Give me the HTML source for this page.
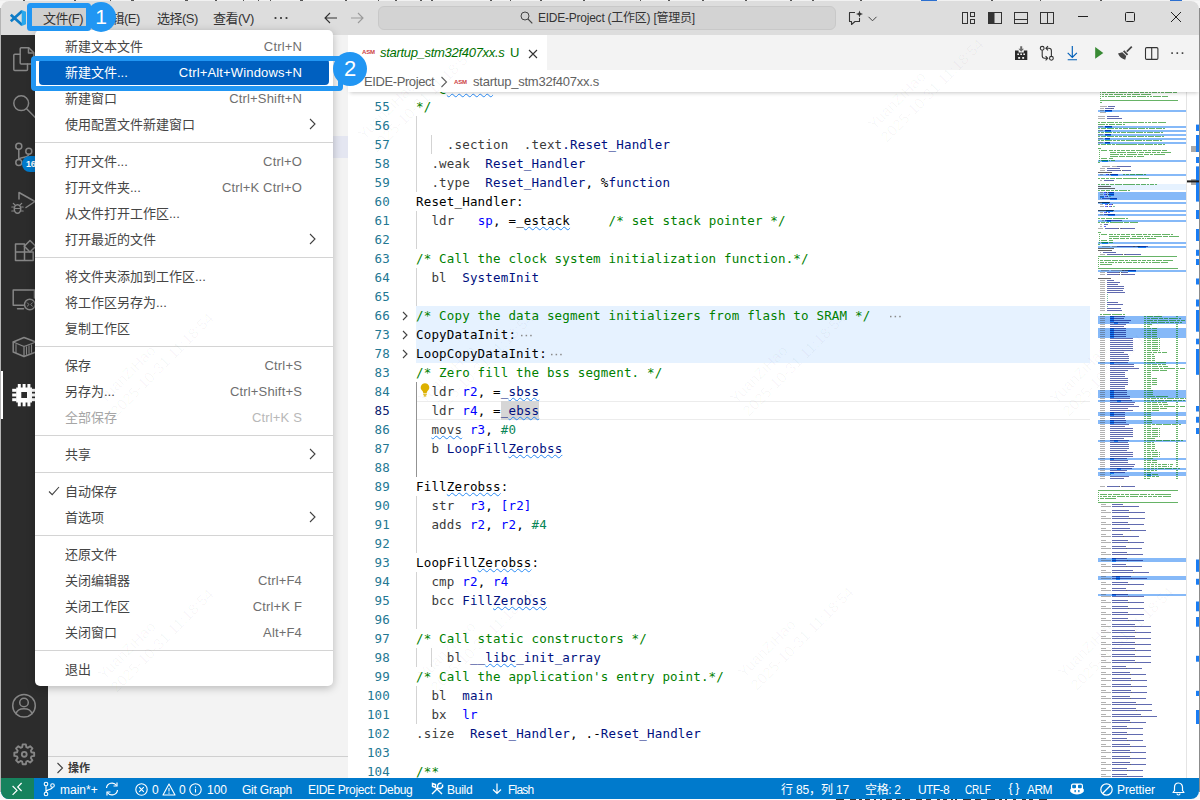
<!DOCTYPE html>
<html lang="zh-CN">
<head>
<meta charset="utf-8">
<title>EIDE-Project</title>
<style>
*{box-sizing:border-box;margin:0;padding:0}
html,body{width:1200px;height:800px;overflow:hidden;background:#f6f6f6}
body{position:relative;font-family:"Liberation Sans","Noto Sans CJK SC",sans-serif;font-size:13px;color:#333}
.abs{position:absolute}
svg{position:absolute;overflow:visible}
#win{left:1px;top:1px;width:1198px;height:797.500px;border-radius:8px;overflow:hidden;background:#fff}
#page{left:-1px;top:-1px;width:1200px;height:800px}
/* title bar */
#title{left:0;top:0;width:1200px;height:35px;background:#dddddd}
.mi{position:absolute;top:2px;height:33px;line-height:33px;font-size:13px;color:#333;white-space:nowrap;letter-spacing:-0.5px}
#cc{left:378px;top:6px;width:458px;height:24px;border:1px solid #c8c8c8;border-radius:6px;background:#d3d3d3}
#cctext{left:142px;top:0;height:22px;line-height:22px;font-size:12px;letter-spacing:-0.24px;color:#333;white-space:nowrap}
/* activity bar */
#act{left:0;top:35px;width:48px;height:743px;background:#2c2c2c}
/* side bar */
#side{left:48px;top:35px;width:300px;height:743px;background:#f3f3f3}
/* editor */
#tabs{left:348px;top:35px;width:852px;height:35px;background:#f3f3f3}
#tab{left:0;top:0;width:200px;height:35px;background:#fff}
#crumbs{left:348px;top:70px;width:852px;height:22px;background:#fff;z-index:3;box-shadow:0 3px 4px -2px rgba(0,0,0,.22)}
#editor{left:348px;top:92px;width:852px;height:686px;background:#fff;overflow:hidden}
.ln{position:absolute;left:0;width:742px;height:19px;line-height:19px;font-family:"DejaVu Sans Mono","Liberation Mono",monospace;font-size:12.5px;letter-spacing:0.175px;white-space:pre;color:#000}
.ln .n{position:absolute;left:0;width:42px;text-align:right;color:#237893}
.ln .c{position:absolute;left:68px;top:0}
.ln .fb{position:absolute;left:68px;top:0;width:674px;height:19px;background:#e6f2ff}
.ln .g{position:absolute;top:0;width:1px;height:19px;background:#d3d3d3}
.ln .g.on{background:#939393}
.cm{color:#008000}.kw{color:#0000ff}.dr{color:#3b3b3b}.lb{color:#001080}.nm{color:#098658}
.sq{text-decoration:underline wavy #2a8bf5;text-decoration-thickness:1.15px;text-underline-offset:0.8px;text-decoration-skip-ink:none}
.hl{background:#d6d6d6;padding:2.2px 0 2.3px}
.el{color:#7a7a7a}
.ln .cl{position:absolute;left:68px;top:0;width:674px;height:19px;border-top:1px solid #ececec;border-bottom:1px solid #ececec}
.ln .n.cn{color:#0b216f}
/* status */
#status{left:0;top:778px;width:1200px;height:22px;background:#007acc;color:#fff;font-size:12px}
#remote{left:0;top:0;width:34px;height:22px;background:#16825d}
.st{position:absolute;top:0;height:22px;line-height:24px;color:#fff;font-size:12px;white-space:nowrap}
/* menu */
#menu{left:35px;top:29.500px;width:298px;height:656.500px;background:#fff;border-radius:5px;box-shadow:0 2px 8px rgba(0,0,0,.25);z-index:10}
.it{position:absolute;left:4px;width:290px;height:26px;line-height:26px;font-size:13px;color:#454545;white-space:nowrap;border-radius:4px}
.it .t{position:absolute;left:26px;top:1px}
.it .k{position:absolute;right:27px;top:1px;color:#6f6f6f;letter-spacing:0.16px}
.it .a{position:absolute;right:10px;top:0}
.it.sel{background:#0060c0;color:#fff}
.it.sel .k{color:#fff}
.it.dis{color:#a6a6a6}.it.dis .k{color:#b8b8b8}
.sep{position:absolute;left:0;width:298px;height:1px;background:#d4d4d4}
.wm{position:absolute;width:150px;height:36px;line-height:18px;font-size:15px;color:rgba(0,0,0,.035);transform:rotate(-45deg);white-space:nowrap;z-index:30;pointer-events:none}
/* annotations */
.box{position:absolute;border:5px solid #2196f3;border-radius:4px;z-index:20}
.dot{position:absolute;width:34px;height:34px;border-radius:17px;background:#2196f3;color:#fff;font-size:22px;line-height:34px;text-align:center;z-index:21}
</style>
</head>
<body>
<div id="win" class="abs"><div id="page" class="abs">
<div id="title" class="abs">
  <svg width="16" height="16" viewBox="0 0 16 16" style="left:10px;top:10px">
    <path d="M12.200 1L0.800 11.200M12.200 15L0.800 4.800" stroke="#0e7cc7" stroke-width="2.700" fill="none"/>
    <path d="M11.700 0L16 1.800V14.200L11.700 16Z" fill="#29a8ed"/>
  </svg>
  <div class="abs" style="left:30px;top:6px;width:62px;height:23px;background:#cfcfcf"></div>
  <span class="mi" style="left:43px">文件(F)</span>
  <span class="mi" style="left:99px">编辑(E)</span>
  <span class="mi" style="left:157px">选择(S)</span>
  <span class="mi" style="left:213px">查看(V)</span>
  <svg width="16" height="4" viewBox="0 0 16 4" style="left:273px;top:16px"><circle cx="2.5" cy="2" r="1.1" fill="#333"/><circle cx="8" cy="2" r="1.1" fill="#333"/><circle cx="13.5" cy="2" r="1.1" fill="#333"/></svg>
  <svg width="14" height="12" viewBox="0 0 14 12" style="left:324px;top:12px"><path d="M6 1 L1 6 L6 11 M1 6 H13" fill="none" stroke="#333" stroke-width="1.1"/></svg>
  <svg width="14" height="12" viewBox="0 0 14 12" style="left:350px;top:12px"><path d="M8 1 L13 6 L8 11 M13 6 H1" fill="none" stroke="#9a9a9a" stroke-width="1.1"/></svg>
  <div id="cc" class="abs">
    <svg width="13" height="13" viewBox="0 0 13 13" style="left:141px;top:4px"><circle cx="5" cy="5" r="4" fill="none" stroke="#444" stroke-width="1"/><path d="M8 8 L12.3 12.3" stroke="#444" stroke-width="1.1"/></svg>
    <div id="cctext" class="abs" style="left:159px">EIDE-Project (工作区) [管理员]</div>
  </div>
  <!-- chat -->
  <svg width="18" height="16" viewBox="0 0 18 16" style="left:847px;top:10px"><path d="M8 2.500H2.500V11.500H4.500V14.500L8 11.500H12.500V8" fill="none" stroke="#333" stroke-width="1.1" stroke-linejoin="round"/><path d="M12.500 0.500 L13.400 3.100 L16 4 L13.400 4.900 L12.500 7.500 L11.600 4.900 L9 4 L11.600 3.100Z" fill="#333"/></svg>
  <svg width="9" height="6" viewBox="0 0 9 6" style="left:868px;top:16px"><path d="M0.500 0.800 L4.500 4.800 L8.500 0.800" fill="none" stroke="#444" stroke-width="1"/></svg>
  <!-- layout icons -->
  <svg width="16" height="16" viewBox="0 0 16 16" style="left:961px;top:10px"><rect x="1.500" y="2.500" width="5" height="11" fill="none" stroke="#333"/><rect x="9.500" y="2.500" width="4" height="4" fill="none" stroke="#333"/><rect x="9.500" y="9.500" width="4" height="4" fill="none" stroke="#333"/></svg>
  <svg width="16" height="16" viewBox="0 0 16 16" style="left:987px;top:10px"><rect x="1.500" y="2.500" width="13" height="11" fill="none" stroke="#333"/><rect x="2" y="3" width="5.500" height="10" fill="#333"/></svg>
  <svg width="16" height="16" viewBox="0 0 16 16" style="left:1013px;top:10px"><rect x="1.500" y="2.500" width="13" height="11" fill="none" stroke="#333"/><path d="M2 9.500H14" stroke="#333"/></svg>
  <svg width="16" height="16" viewBox="0 0 16 16" style="left:1039px;top:10px"><rect x="1.500" y="2.500" width="13" height="11" fill="none" stroke="#333"/><path d="M8.500 3V13" stroke="#333"/></svg>
  <!-- window controls -->
  <svg width="10" height="2" viewBox="0 0 10 2" style="left:1078px;top:16px"><path d="M0 0.500H10" stroke="#222" stroke-width="1"/></svg>
  <svg width="10" height="10" viewBox="0 0 10 10" style="left:1125px;top:12px"><rect x="0.500" y="0.500" width="9" height="9" rx="1" fill="none" stroke="#222" stroke-width="1"/></svg>
  <svg width="10" height="10" viewBox="0 0 10 10" style="left:1171px;top:12px"><path d="M0 0 L10 10 M10 0 L0 10" stroke="#222" stroke-width="1"/></svg>
</div>
<div id="act" class="abs">
<svg width="48" height="743" viewBox="0 35 48 743" style="left:0;top:0" fill="none" stroke="#868686" stroke-width="1.5" stroke-linejoin="round" stroke-linecap="round">
  <!-- files -->
  <path d="M20.200 53.500V48.800a1 1 0 0 1 1-1H28.800L33.800 52.800V63a1 1 0 0 1-1 1H21.200a1 1 0 0 1-1-1Z"/>
  <path d="M28.500 48V53H33.500"/>
  <path d="M20.200 54.200H14.800a1 1 0 0 0-1 1V69.400a1 1 0 0 0 1 1H26.500a1 1 0 0 0 1-1V64"/>
  <!-- search -->
  <circle cx="21.200" cy="103.200" r="7.400"/><path d="M26.600 108.700L36 118.200"/>
  <!-- scm -->
  <circle cx="18.800" cy="146.300" r="3"/><circle cx="18.800" cy="162.600" r="3"/><circle cx="28.800" cy="151.300" r="3"/>
  <path d="M18.800 149.300V159.600M28.800 154.300C28.800 158.500 18.800 156.500 18.800 159.600"/>
  <!-- debug -->
  <path d="M19 199V192.500L35 201.500L26 207.500"/>
  <ellipse cx="17.500" cy="209" rx="3.200" ry="4.200"/>
  <path d="M14.300 207H11.800M14.300 211H11.800M20.700 207H23.200M20.700 211H23.200M15 205L13.300 203.300M20 205L21.700 203.300M14.400 208.500H20.600" stroke-width="1.200"/>
  <!-- extensions -->
  <path d="M15.500 244H24.500V260.500H15.500ZM15.500 252H33.200V260.500H24.500"/>
  <path d="M30 240.500L35.800 246.300L30 252L24.300 246.300Z"/>
  <!-- remote explorer -->
  <path d="M23.500 305.200H13.200V290H34.500V298"/><path d="M17.500 308.800H23.500"/>
  <circle cx="29.800" cy="304.500" r="5.300"/><path d="M27.300 302.800L29 304.500L27.300 306.200M32.300 302.800L30.800 304.500L32.300 306.200" stroke-width="1"/>
  <!-- container -->
  <path d="M13.200 342L24 337.500L36 342V352L24 356.500L13.200 352Z"/>
  <path d="M13.200 342L24 346.500L36 342M24 346.500V356.500" stroke-width="1.300"/>
  <path d="M26.500 346.800V354.300M29 345.800V353.300M31.500 344.800V352.300M16 344.500V352.500" stroke-width="1.100"/>
  <!-- account -->
  <circle cx="24" cy="705.800" r="11.300"/><circle cx="24" cy="702.500" r="4.300"/>
  <path d="M16 713.800C17 709.800 20 708.800 24 708.800S31 709.800 32 713.800"/>
</svg>
  <div class="abs" style="left:22px;top:121px;width:20px;height:16px;border-radius:8px;background:#007acc;color:#fff;font-size:9px;font-weight:bold;line-height:16px;text-align:left;padding-left:4px;letter-spacing:-0.3px">16</div>
  <!-- EIDE chip active -->
  <div class="abs" style="left:1px;top:336px;width:2px;height:48px;background:#fff"></div>
  <svg width="26" height="24" viewBox="12 383 26 24" style="left:12px;top:348px" fill="#fff"><path d="M16.200 387.500H32V402.500H16.200Z M21.300 392V398H27V392Z" fill-rule="evenodd"/>
  <rect x="17.800" y="384" width="3" height="4"/><rect x="22.600" y="384" width="3" height="4"/><rect x="27.400" y="384" width="3" height="4"/>
  <rect x="17.800" y="402" width="3" height="4.300"/><rect x="22.600" y="402" width="3" height="4.300"/><rect x="27.400" y="402" width="3" height="4.300"/>
  <rect x="12.200" y="388.800" width="4.500" height="3"/><rect x="12.200" y="393.500" width="4.500" height="3"/><rect x="12.200" y="398.200" width="4.500" height="3"/>
  <rect x="31.500" y="388.800" width="4.500" height="3"/><rect x="31.500" y="393.500" width="4.500" height="3"/><rect x="31.500" y="398.200" width="4.500" height="3"/></svg>
  <!-- gear -->
  <svg width="22.500" height="22.500" viewBox="0 0 24 24" style="left:12.800px;top:708px" fill="none" stroke="#868686" stroke-width="2" stroke-linejoin="round"><circle cx="12" cy="12" r="2.600"/><path d="M10.300 1.500h3.400l.5 2.900 1.700.7 2.400-1.700 2.400 2.400-1.700 2.400.7 1.700 2.900.5v3.400l-2.900.5-.7 1.700 1.700 2.400-2.400 2.400-2.400-1.700-1.700.7-.5 2.900h-3.400l-.5-2.900-1.700-.7-2.400 1.700-2.400-2.400 1.700-2.400-.7-1.700-2.900-.5v-3.400l2.900-.5.700-1.700-1.700-2.400 2.400-2.400 2.400 1.700 1.700-.7z"/></svg>
</div>
<div id="side" class="abs">
  <div class="abs" style="left:0;top:100.500px;width:300px;height:22.500px;background:#e4e6f1"></div>
  <div class="abs" style="left:0;top:721px;width:300px;height:1px;background:#cfcfcf"></div>
  <svg width="8" height="12" viewBox="0 0 8 12" style="left:8px;top:727px"><path d="M1.500 1L6.500 6L1.500 11" fill="none" stroke="#424242" stroke-width="1.100"/></svg>
  <div class="abs" style="left:20px;top:722px;height:22px;line-height:22px;font-size:11px;font-weight:bold;color:#3b3b3b">操作</div>
</div>
<div id="tabs" class="abs">
  <div id="tab" class="abs" style="width:199px">
    <span class="abs" style="left:14px;top:12.500px;font-size:6px;font-weight:bold;color:#cc3e44;letter-spacing:-0.2px;line-height:8px">ASM</span>
    <span class="abs" id="tabname" style="left:32px;top:0;line-height:36px;font-size:13px;font-style:italic;color:#007100;white-space:nowrap;letter-spacing:-0.3px">startup_stm32f407xx.s</span>
    <span class="abs" style="left:162px;top:0;line-height:35px;font-size:13px;color:#007100">U</span>
    <svg width="10" height="10" viewBox="0 0 10 10" style="left:180px;top:14px"><path d="M1 1L9 9M9 1L1 9" stroke="#333" stroke-width="1.100"/></svg>
  </div>
  <!-- toolbar icons drawn in page coords -->
  <svg width="200" height="35" viewBox="1000 35 200 35" style="left:652px;top:0">
    <!-- build chip -->
    <path d="M1015 50.400H1018.600V52.600H1023.800V50.400H1027.300V60H1015Z" fill="#2b2b2b"/>
    <g fill="#f3f3f3"><rect x="1017.300" y="53.500" width="1.700" height="1.500"/><rect x="1020.300" y="53.500" width="1.700" height="1.500"/><rect x="1023.300" y="53.500" width="1.700" height="1.500"/><rect x="1018.200" y="57" width="1.900" height="1.800"/><rect x="1022.200" y="57" width="1.900" height="1.800"/></g>
    <path d="M1020.200 46.200H1022.200V48.800H1024L1021.200 51.800L1018.400 48.800H1020.200Z" fill="#6a6a6a"/>
    <!-- git compare -->
    <g fill="none" stroke="#333" stroke-width="1.100"><circle cx="1042.200" cy="48.300" r="1.900"/><circle cx="1051.400" cy="58.300" r="1.900"/>
    <path d="M1042.200 50.200V55.800Q1042.200 58.300 1044.700 58.300H1047.600M1045.600 56.200L1047.700 58.300L1045.600 60.400M1051.400 56.400V50.800Q1051.400 48.300 1048.900 48.300H1046M1048 46.200L1045.900 48.300L1048 50.400"/></g>
    <!-- download -->
    <path d="M1072.300 46V57.300M1067.700 52.800L1072.300 57.400L1076.900 52.800M1067.700 59.700H1077" fill="none" stroke="#005fb8" stroke-width="1.150"/>
    <!-- play -->
    <path d="M1095.200 47L1103.300 52.900L1095.200 58.800Z" fill="#388a34"/>
    <!-- brush -->
    <path d="M1131.800 46.600L1126.800 51.600" stroke="#444" stroke-width="1.700" fill="none"/>
    <path d="M1124.300 50.300L1128.200 54.200L1126.900 55.400L1123 51.500Z" fill="#444"/>
    <path d="M1122.300 52.200L1126.200 56.100L1125.200 59.800Q1120 58.300 1118 53.600Z" fill="#444"/>
    <!-- split -->
    <g fill="none" stroke="#333" stroke-width="1.100"><rect x="1145.500" y="47.600" width="12.400" height="11.800" rx="1.200"/><path d="M1151.700 47.600V59.400"/></g>
    <!-- more -->
    <g fill="#333"><rect x="1171.300" y="52.300" width="1.600" height="1.600"/><rect x="1176.500" y="52.300" width="1.600" height="1.600"/><rect x="1181.700" y="52.300" width="1.600" height="1.600"/></g>
  </svg>
</div>
<div id="crumbs" class="abs">
  <span class="abs" id="bc1" style="left:16px;top:0;line-height:23px;font-size:13px;color:#616161;white-space:nowrap;letter-spacing:-0.4px">EIDE-Project</span>
  <svg width="8" height="12" viewBox="0 0 8 12" style="left:92px;top:6px"><path d="M1.500 1L6.500 6L1.500 11" fill="none" stroke="#616161" stroke-width="1.100"/></svg>
  <span class="abs" style="left:106px;top:8px;font-size:6px;font-weight:bold;color:#cc3e44;letter-spacing:-0.2px;line-height:8px">ASM</span>
  <span class="abs" id="bc2" style="left:125px;top:0;line-height:23px;font-size:13px;color:#616161;white-space:nowrap;letter-spacing:-0.23px">startup_stm32f407xx.s</span>
</div>
<div id="editor" class="abs">
<div class="ln" style="top:-14px"><span class="c"><span class="cm"> * @</span><span class="cm sq">retval</span><span class="cm"> : None</span></span></div>
<div class="ln" style="top:5px"><span class="n">55</span><span class="c"><span class="cm">*/</span></span></div>
<div class="ln" style="top:24px"><i class="g" style="left:68.0px"></i><span class="n">56</span></div>
<div class="ln" style="top:43px"><i class="g" style="left:68.0px"></i><i class="g" style="left:83.4px"></i><span class="n">57</span><span class="c">    <span class="dr">.section  .text</span><span class="lb">.Reset_Handler</span></span></div>
<div class="ln" style="top:62px"><i class="g" style="left:68.0px"></i><span class="n">58</span><span class="c">  <span class="dr">.weak</span>  <span class="lb">Reset_Handler</span></span></div>
<div class="ln" style="top:81px"><i class="g" style="left:68.0px"></i><span class="n">59</span><span class="c">  <span class="dr">.type</span>  <span class="lb">Reset_Handler</span>, %<span class="lb">function</span></span></div>
<div class="ln" style="top:100px"><span class="n">60</span><span class="c">Reset_Handler:</span></div>
<div class="ln" style="top:119px"><i class="g" style="left:68.0px"></i><span class="n">61</span><span class="c">  <span class="dr">ldr</span>   <span class="kw">sp</span>, =_<span class="sq">estack</span>     <span class="cm">/* set stack pointer */</span></span></div>
<div class="ln" style="top:138px"><i class="g" style="left:68.0px"></i><span class="n">62</span></div>
<div class="ln" style="top:157px"><span class="n">63</span><span class="c"><span class="cm">/* Call the clock system initialization function.*/</span></span></div>
<div class="ln" style="top:176px"><i class="g" style="left:68.0px"></i><span class="n">64</span><span class="c">  <span class="dr">bl</span>  <span class="lb">SystemInit</span></span></div>
<div class="ln" style="top:195px"><i class="g" style="left:68.0px"></i><span class="n">65</span></div>
<div class="ln" style="top:214px"><i class="fb"></i><span class="n">66</span><svg class="fa" width="10" height="10" viewBox="0 0 10 10" style="left:52px;top:5px"><path d="M3 1 L7 5 L3 9" fill="none" stroke="#424242" stroke-width="1.1"/></svg><span class="c"><span class="cm">/* Copy the data segment initializers from flash to SRAM */</span>  <svg width="11" height="3" viewBox="0 0 11 3" style="position:static;display:inline-block;margin-left:4.500px;vertical-align:2.500px"><rect x="0" y="0.800" width="1.500" height="1.500" fill="#8a8a8a"/><rect x="4.600" y="0.800" width="1.500" height="1.500" fill="#8a8a8a"/><rect x="9.200" y="0.800" width="1.500" height="1.500" fill="#8a8a8a"/></svg></span></div>
<div class="ln" style="top:233px"><i class="fb"></i><span class="n">73</span><svg class="fa" width="10" height="10" viewBox="0 0 10 10" style="left:52px;top:5px"><path d="M3 1 L7 5 L3 9" fill="none" stroke="#424242" stroke-width="1.1"/></svg><span class="c">CopyDataInit:<svg width="11" height="3" viewBox="0 0 11 3" style="position:static;display:inline-block;margin-left:4.500px;vertical-align:2.500px"><rect x="0" y="0.800" width="1.500" height="1.500" fill="#8a8a8a"/><rect x="4.600" y="0.800" width="1.500" height="1.500" fill="#8a8a8a"/><rect x="9.200" y="0.800" width="1.500" height="1.500" fill="#8a8a8a"/></svg></span></div>
<div class="ln" style="top:252px"><i class="fb"></i><span class="n">78</span><svg class="fa" width="10" height="10" viewBox="0 0 10 10" style="left:52px;top:5px"><path d="M3 1 L7 5 L3 9" fill="none" stroke="#424242" stroke-width="1.1"/></svg><span class="c">LoopCopyDataInit:<svg width="11" height="3" viewBox="0 0 11 3" style="position:static;display:inline-block;margin-left:4.500px;vertical-align:2.500px"><rect x="0" y="0.800" width="1.500" height="1.500" fill="#8a8a8a"/><rect x="4.600" y="0.800" width="1.500" height="1.500" fill="#8a8a8a"/><rect x="9.200" y="0.800" width="1.500" height="1.500" fill="#8a8a8a"/></svg></span></div>
<div class="ln" style="top:271px"><span class="n">83</span><span class="c"><span class="cm">/* Zero fill the bss segment. */</span></span></div>
<div class="ln" style="top:290px"><i class="g on" style="left:68.0px"></i><span class="n">84</span><svg width="12" height="16" viewBox="0 0 12 16" style="left:70.500px;top:-0.500px"><path d="M6 1.2a4.3 4.3 0 0 0-2.6 7.7c.5.5.8 1 .8 1.7v.4h3.6v-.4c0-.7.3-1.2.8-1.7A4.3 4.3 0 0 0 6 1.200z" fill="#ddb100"/><rect x="4.2" y="11.6" width="3.6" height="1.2" fill="#ddb100"/><rect x="4.6" y="13.3" width="2.8" height="1.2" rx=".5" fill="#ddb100"/></svg><span class="c">  <span class="dr">ldr</span> <span class="kw">r2</span>, =<span class="lb">_</span><span class="lb sq">sbss</span></span></div>
<div class="ln" style="top:309px"><i class="cl"></i><i class="g on" style="left:68.0px"></i><span class="n cn">85</span><span class="c">  <span class="dr">ldr</span> <span class="kw">r4</span>, =<span class="lb hl">_</span><span class="lb sq hl">ebss</span></span></div>
<div class="ln" style="top:328px"><i class="g on" style="left:68.0px"></i><span class="n">86</span><span class="c">  <span class="dr sq">movs</span> <span class="kw">r3</span>, <span class="nm">#0</span></span></div>
<div class="ln" style="top:347px"><i class="g on" style="left:68.0px"></i><span class="n">87</span><span class="c">  <span class="dr">b</span> <span class="lb">LoopFill</span><span class="lb sq">Zerobss</span></span></div>
<div class="ln" style="top:366px"><i class="g on" style="left:68.0px"></i><span class="n">88</span></div>
<div class="ln" style="top:385px"><span class="n">89</span><span class="c">Fill<span class="sq">Zerobss</span>:</span></div>
<div class="ln" style="top:404px"><i class="g" style="left:68.0px"></i><span class="n">90</span><span class="c">  <span class="dr">str</span>  <span class="kw">r3</span>, <span class="kw">[r2]</span></span></div>
<div class="ln" style="top:423px"><i class="g" style="left:68.0px"></i><span class="n">91</span><span class="c">  <span class="dr">adds</span> <span class="kw">r2</span>, <span class="kw">r2</span>, <span class="nm">#4</span></span></div>
<div class="ln" style="top:442px"><i class="g" style="left:68.0px"></i><span class="n">92</span></div>
<div class="ln" style="top:461px"><span class="n">93</span><span class="c">LoopFill<span class="sq">Zerobss</span>:</span></div>
<div class="ln" style="top:480px"><i class="g" style="left:68.0px"></i><span class="n">94</span><span class="c">  <span class="dr">cmp</span> <span class="kw">r2</span>, <span class="kw">r4</span></span></div>
<div class="ln" style="top:499px"><i class="g" style="left:68.0px"></i><span class="n">95</span><span class="c">  <span class="dr">bcc</span> <span class="lb">Fill</span><span class="lb sq">Zerobss</span></span></div>
<div class="ln" style="top:518px"><i class="g" style="left:68.0px"></i><span class="n">96</span></div>
<div class="ln" style="top:537px"><span class="n">97</span><span class="c"><span class="cm">/* Call static constructors */</span></span></div>
<div class="ln" style="top:556px"><i class="g" style="left:68.0px"></i><i class="g" style="left:83.4px"></i><span class="n">98</span><span class="c">    <span class="dr">bl</span> <span class="lb">__</span><span class="lb sq">libc</span><span class="lb">_init_array</span></span></div>
<div class="ln" style="top:575px"><span class="n">99</span><span class="c"><span class="cm">/* Call the application's entry point.*/</span></span></div>
<div class="ln" style="top:594px"><i class="g" style="left:68.0px"></i><span class="n">100</span><span class="c">  <span class="dr">bl</span>  <span class="lb">main</span></span></div>
<div class="ln" style="top:613px"><i class="g" style="left:68.0px"></i><span class="n">101</span><span class="c">  <span class="dr">bx</span>  <span class="kw">lr</span></span></div>
<div class="ln" style="top:632px"><span class="n">102</span><span class="c"><span class="dr">.size</span>  <span class="lb">Reset_Handler</span>, .-<span class="lb">Reset_Handler</span></span></div>
<div class="ln" style="top:651px"><span class="n">103</span></div>
<div class="ln" style="top:670px"><span class="n">104</span><span class="c"><span class="cm">/**</span></span></div>
<svg id="mm" width="88" height="688" viewBox="0 0 88 688" style="left:750px;top:0;overflow:hidden" shape-rendering="crispEdges">
<rect x="0" y="18" width="88" height="2" fill="#86b9f8"/>
<rect x="7" y="18" width="7" height="2" fill="#1a7df3"/>
<rect x="0" y="34" width="88" height="2" fill="#86b9f8"/>
<rect x="7" y="34" width="7" height="2" fill="#1a7df3"/>
<rect x="0" y="38" width="88" height="2" fill="#86b9f8"/>
<rect x="7" y="38" width="6" height="2" fill="#1a7df3"/>
<rect x="0" y="42" width="88" height="2" fill="#86b9f8"/>
<rect x="7" y="42" width="6" height="2" fill="#1a7df3"/>
<rect x="0" y="46" width="88" height="2" fill="#86b9f8"/>
<rect x="7" y="46" width="5" height="2" fill="#1a7df3"/>
<rect x="0" y="50" width="88" height="2" fill="#86b9f8"/>
<rect x="7" y="50" width="5" height="2" fill="#1a7df3"/>
<rect x="0" y="68" width="88" height="2" fill="#86b9f8"/>
<rect x="4" y="68" width="6" height="2" fill="#1a7df3"/>
<rect x="0" y="82" width="88" height="2" fill="#86b9f8"/>
<rect x="13" y="82" width="7" height="2" fill="#1a7df3"/>
<rect x="0" y="92" width="88" height="2" fill="#e6f2ff"/>
<rect x="0" y="94" width="88" height="2" fill="#e6f2ff"/>
<rect x="0" y="96" width="88" height="2" fill="#e6f2ff"/>
<rect x="0" y="100" width="88" height="2" fill="#86b9f8"/>
<rect x="11" y="100" width="5" height="2" fill="#1a7df3"/>
<rect x="0" y="102" width="88" height="2" fill="#86b9f8"/>
<rect x="11" y="102" width="5" height="2" fill="#1a7df3"/>
<rect x="0" y="104" width="88" height="2" fill="#86b9f8"/>
<rect x="2" y="104" width="4" height="2" fill="#1a7df3"/>
<rect x="0" y="106" width="88" height="2" fill="#86b9f8"/>
<rect x="12" y="106" width="7" height="2" fill="#1a7df3"/>
<rect x="0" y="110" width="88" height="2" fill="#86b9f8"/>
<rect x="4" y="110" width="7" height="2" fill="#1a7df3"/>
<rect x="0" y="118" width="88" height="2" fill="#86b9f8"/>
<rect x="8" y="118" width="7" height="2" fill="#1a7df3"/>
<rect x="0" y="122" width="88" height="2" fill="#86b9f8"/>
<rect x="10" y="122" width="7" height="2" fill="#1a7df3"/>
<rect x="0" y="128" width="88" height="2" fill="#86b9f8"/>
<rect x="9" y="128" width="4" height="2" fill="#1a7df3"/>
<rect x="0" y="150" width="88" height="2" fill="#86b9f8"/>
<rect x="4" y="150" width="6" height="2" fill="#1a7df3"/>
<rect x="0" y="154" width="88" height="2" fill="#86b9f8"/>
<rect x="40" y="154" width="8" height="2" fill="#1a7df3"/>
<rect x="0" y="178" width="88" height="2" fill="#86b9f8"/>
<rect x="30" y="178" width="8" height="2" fill="#1a7df3"/>
<rect x="0" y="224" width="88" height="2" fill="#86b9f8"/>
<rect x="12" y="224" width="4" height="2" fill="#1a7df3"/>
<rect x="0" y="226" width="88" height="2" fill="#86b9f8"/>
<rect x="12" y="226" width="4" height="2" fill="#1a7df3"/>
<rect x="0" y="228" width="88" height="2" fill="#86b9f8"/>
<rect x="12" y="228" width="4" height="2" fill="#1a7df3"/>
<rect x="0" y="230" width="88" height="2" fill="#86b9f8"/>
<rect x="16" y="230" width="4" height="2" fill="#1a7df3"/>
<rect x="0" y="236" width="88" height="2" fill="#86b9f8"/>
<rect x="12" y="236" width="4" height="2" fill="#1a7df3"/>
<rect x="0" y="238" width="88" height="2" fill="#86b9f8"/>
<rect x="12" y="238" width="4" height="2" fill="#1a7df3"/>
<rect x="0" y="240" width="88" height="2" fill="#86b9f8"/>
<rect x="12" y="240" width="4" height="2" fill="#1a7df3"/>
<rect x="0" y="242" width="88" height="2" fill="#86b9f8"/>
<rect x="12" y="242" width="4" height="2" fill="#1a7df3"/>
<rect x="0" y="244" width="88" height="2" fill="#86b9f8"/>
<rect x="12" y="244" width="4" height="2" fill="#1a7df3"/>
<rect x="0" y="270" width="88" height="2" fill="#86b9f8"/>
<rect x="12" y="270" width="4" height="2" fill="#1a7df3"/>
<rect x="0" y="298" width="88" height="2" fill="#86b9f8"/>
<rect x="12" y="298" width="4" height="2" fill="#1a7df3"/>
<rect x="0" y="300" width="88" height="2" fill="#86b9f8"/>
<rect x="12" y="300" width="4" height="2" fill="#1a7df3"/>
<rect x="0" y="302" width="88" height="2" fill="#86b9f8"/>
<rect x="12" y="302" width="4" height="2" fill="#1a7df3"/>
<rect x="0" y="304" width="88" height="2" fill="#86b9f8"/>
<rect x="12" y="304" width="4" height="2" fill="#1a7df3"/>
<rect x="0" y="308" width="88" height="2" fill="#86b9f8"/>
<rect x="19" y="308" width="4" height="2" fill="#1a7df3"/>
<rect x="0" y="320" width="88" height="2" fill="#86b9f8"/>
<rect x="12" y="320" width="4" height="2" fill="#1a7df3"/>
<rect x="0" y="322" width="88" height="2" fill="#86b9f8"/>
<rect x="12" y="322" width="4" height="2" fill="#1a7df3"/>
<rect x="0" y="328" width="88" height="2" fill="#86b9f8"/>
<rect x="12" y="328" width="4" height="2" fill="#1a7df3"/>
<rect x="0" y="330" width="88" height="2" fill="#86b9f8"/>
<rect x="12" y="330" width="4" height="2" fill="#1a7df3"/>
<rect x="0" y="348" width="88" height="2" fill="#86b9f8"/>
<rect x="16" y="348" width="4" height="2" fill="#1a7df3"/>
<rect x="0" y="366" width="88" height="2" fill="#86b9f8"/>
<rect x="12" y="366" width="4" height="2" fill="#1a7df3"/>
<rect x="0" y="376" width="88" height="2" fill="#86b9f8"/>
<rect x="19" y="376" width="4" height="2" fill="#1a7df3"/>
<rect x="0" y="380" width="88" height="2" fill="#86b9f8"/>
<rect x="12" y="380" width="4" height="2" fill="#1a7df3"/>
<rect x="0" y="382" width="88" height="2" fill="#86b9f8"/>
<rect x="49" y="382" width="4" height="2" fill="#1a7df3"/>
<rect x="0" y="466" width="88" height="2" fill="#86b9f8"/>
<rect x="14" y="466" width="4" height="2" fill="#1a7df3"/>
<rect x="0" y="468" width="88" height="2" fill="#86b9f8"/>
<rect x="14" y="468" width="4" height="2" fill="#1a7df3"/>
<rect x="0" y="484" width="88" height="2" fill="#86b9f8"/>
<rect x="18" y="484" width="4" height="2" fill="#1a7df3"/>
<rect x="0" y="486" width="88" height="2" fill="#86b9f8"/>
<rect x="18" y="486" width="4" height="2" fill="#1a7df3"/>
<rect x="0" y="502" width="88" height="2" fill="#86b9f8"/>
<rect x="14" y="502" width="4" height="2" fill="#1a7df3"/>
<path d="M2 0.9h1M4 0.9h4M9 0.9h8M18 0.9h2M21 0.9h8M30 0.9h5M36 0.9h5M42 0.9h4M47 0.9h3M51 0.9h2M54 0.9h5M60 0.9h2M63 0.9h3M67 0.9h7M75 0.9h4M2 2.9h1M4 2.9h2M7 2.9h3M11 2.9h4M16 2.9h9M26 2.9h2M29 2.9h4M34 2.9h8M43 2.9h10M2 4.9h1M4 4.9h2M7 4.9h2M10 4.9h7M18 4.9h4M23 4.9h5M29 4.9h4M34 4.9h4M39 4.9h9M49 4.9h2M52 4.9h2M55 4.9h8M64 4.9h6M2 6.9h1M2 8.9h78M2 10.9h2M0 30.9h2M3 30.9h5M9 30.9h7M17 30.9h3M21 30.9h3M25 30.9h14M40 30.9h6M47 30.9h2M50 30.9h3M54 30.9h5M60 30.9h8M0 32.9h7M8 32.9h2M11 32.9h6M18 32.9h6M25 32.9h2M0 36.9h2M3 36.9h5M9 36.9h7M17 36.9h3M21 36.9h3M25 36.9h5M31 36.9h8M40 36.9h7M48 36.9h2M51 36.9h6M58 36.9h6M65 36.9h2M0 40.9h2M3 40.9h3M7 40.9h7M15 40.9h3M19 40.9h3M23 40.9h5M29 40.9h8M38 40.9h7M46 40.9h2M49 40.9h6M56 40.9h6M63 40.9h2M0 44.9h2M3 44.9h5M9 44.9h7M17 44.9h3M21 44.9h3M25 44.9h4M30 44.9h8M39 44.9h7M47 44.9h2M50 44.9h6M57 44.9h6M64 44.9h2M0 48.9h2M3 48.9h3M7 48.9h7M15 48.9h3M19 48.9h3M23 48.9h4M28 48.9h8M37 48.9h7M45 48.9h2M48 48.9h6M55 48.9h6M62 48.9h2M0 52.9h2M3 52.9h5M9 52.9h4M14 52.9h3M18 52.9h21M40 52.9h6M47 52.9h8M56 52.9h3M60 52.9h4M65 52.9h2M0 56.9h3M1 58.9h1M3 58.9h6M11 58.9h4M16 58.9h2M19 58.9h3M23 58.9h4M28 58.9h4M33 58.9h4M38 58.9h6M45 58.9h4M50 58.9h3M54 58.9h9M64 58.9h5M1 60.9h1M12 60.9h6M19 60.9h9M29 60.9h9M39 60.9h1M41 60.9h5M47 60.9h6M54 60.9h4M59 60.9h3M63 60.9h10M1 62.9h1M12 62.9h9M22 62.9h3M26 62.9h2M29 62.9h10M40 62.9h5M46 62.9h5M52 62.9h3M56 62.9h11M1 64.9h1M12 64.9h8M21 64.9h6M28 64.9h7M36 64.9h2M39 64.9h7M1 66.9h1M3 66.9h6M11 66.9h4M1 68.9h1M3 68.9h7M11 68.9h1M13 68.9h4M0 70.9h2M25 82.9h2M28 82.9h3M32 82.9h5M38 82.9h7M46 82.9h2M0 86.9h2M3 86.9h4M8 86.9h3M12 86.9h5M18 86.9h6M25 86.9h14M40 86.9h11M0 92.9h2M3 92.9h4M8 92.9h3M12 92.9h4M17 92.9h7M25 92.9h12M38 92.9h4M43 92.9h5M49 92.9h2M52 92.9h4M57 92.9h2M0 98.9h2M3 98.9h4M8 98.9h4M13 98.9h3M17 98.9h3M21 98.9h8M30 98.9h2M0 126.9h2M3 126.9h4M8 126.9h6M15 126.9h12M28 126.9h2M0 130.9h2M3 130.9h4M8 130.9h3M12 130.9h13M26 130.9h5M32 130.9h8M0 140.9h3M1 142.9h1M3 142.9h6M11 142.9h4M16 142.9h2M19 142.9h3M23 142.9h4M28 142.9h4M33 142.9h4M38 142.9h6M45 142.9h4M50 142.9h3M54 142.9h9M64 142.9h8M73 142.9h2M1 144.9h1M11 144.9h10M22 144.9h10M34 144.9h4M39 144.9h6M46 144.9h6M53 144.9h2M56 144.9h8M65 144.9h5M71 144.9h10M1 146.9h1M11 146.9h3M15 146.9h6M22 146.9h5M28 146.9h3M32 146.9h11M44 146.9h2M47 146.9h1M49 146.9h9M1 148.9h1M3 148.9h6M11 148.9h4M1 150.9h1M3 150.9h7M11 150.9h4M0 152.9h2M0 164.9h79M0 166.9h1M0 168.9h1M2 168.9h3M6 168.9h7M14 168.9h6M21 168.9h5M27 168.9h3M31 168.9h1M33 168.9h6M40 168.9h3M44 168.9h4M49 168.9h4M54 168.9h3M58 168.9h6M65 168.9h10M0 170.9h1M2 170.9h4M7 170.9h2M10 170.9h6M17 170.9h2M20 170.9h4M25 170.9h2M28 170.9h6M35 170.9h4M40 170.9h2M43 170.9h4M48 170.9h2M51 170.9h2M54 170.9h8M63 170.9h7M0 172.9h1M2 172.9h12M0 174.9h1M0 176.9h80M2 222.9h2M5 222.9h8M14 222.9h10M25 222.9h2M46 224.9h2M49 224.9h6M56 224.9h8M78 224.9h2M46 226.9h2M49 226.9h3M53 226.9h7M61 226.9h4M66 226.9h4M71 226.9h9M81 226.9h2M46 228.9h2M49 228.9h6M56 228.9h3M60 228.9h10M71 228.9h7M79 228.9h3M83 228.9h4M46 230.9h2M49 230.9h3M53 230.9h6M60 230.9h7M68 230.9h3M72 230.9h4M77 230.9h4M82 230.9h2M46 232.9h2M49 232.9h5M78 232.9h2M46 234.9h2M49 234.9h3M78 234.9h2M46 236.9h2M49 236.9h4M54 236.9h5M78 236.9h2M46 238.9h2M49 238.9h4M54 238.9h5M78 238.9h2M46 240.9h2M49 240.9h4M54 240.9h5M78 240.9h2M46 242.9h2M49 242.9h4M54 242.9h5M78 242.9h2M46 244.9h2M49 244.9h4M54 244.9h5M78 244.9h2M46 246.9h2M49 246.9h4M54 246.9h6M61 246.9h1M78 246.9h2M46 248.9h2M49 248.9h4M54 248.9h6M61 248.9h1M78 248.9h2M46 250.9h2M49 250.9h4M54 250.9h6M61 250.9h1M78 250.9h2M46 252.9h2M49 252.9h4M54 252.9h6M61 252.9h1M78 252.9h2M46 254.9h2M49 254.9h4M54 254.9h6M61 254.9h1M78 254.9h2M46 256.9h2M49 256.9h4M54 256.9h6M61 256.9h1M78 256.9h2M46 258.9h2M49 258.9h4M54 258.9h6M61 258.9h1M78 258.9h2M46 260.9h2M49 260.9h5M55 260.9h4M60 260.9h3M64 260.9h5M78 260.9h2M46 262.9h2M49 262.9h4M54 262.9h2M78 262.9h2M46 264.9h2M49 264.9h4M54 264.9h3M78 264.9h2M46 266.9h2M49 266.9h4M54 266.9h3M78 266.9h2M46 268.9h2M49 268.9h4M54 268.9h3M78 268.9h2M46 270.9h2M49 270.9h8M58 270.9h10M78 270.9h2M46 272.9h2M49 272.9h4M54 272.9h5M60 272.9h3M64 272.9h4M78 272.9h2M46 274.9h2M49 274.9h4M54 274.9h6M61 274.9h3M65 274.9h5M78 274.9h2M46 276.9h2M49 276.9h4M54 276.9h7M62 276.9h3M66 276.9h11M78 276.9h3M82 276.9h5M46 278.9h2M49 278.9h4M54 278.9h7M62 278.9h7M78 278.9h2M46 280.9h2M49 280.9h4M78 280.9h2M46 282.9h2M49 282.9h4M78 282.9h2M46 284.9h2M49 284.9h4M78 284.9h2M46 286.9h2M49 286.9h4M54 286.9h5M78 286.9h2M46 288.9h2M49 288.9h4M54 288.9h5M78 288.9h2M46 290.9h2M49 290.9h4M54 290.9h5M78 290.9h2M46 292.9h2M49 292.9h4M54 292.9h5M78 292.9h2M46 294.9h2M49 294.9h4M78 294.9h2M46 296.9h2M49 296.9h4M78 296.9h2M46 298.9h2M49 298.9h6M78 298.9h2M46 300.9h2M49 300.9h6M78 300.9h2M46 302.9h2M49 302.9h6M78 302.9h2M46 304.9h2M49 304.9h8M58 304.9h12M78 304.9h2M46 306.9h2M49 306.9h3M53 306.9h5M59 306.9h2M62 306.9h3M66 306.9h2M69 306.9h7M77 306.9h4M82 306.9h4M87 306.9h1M46 308.9h2M49 308.9h3M53 308.9h3M57 308.9h2M60 308.9h6M67 308.9h7M75 308.9h4M80 308.9h4M85 308.9h2M46 310.9h2M49 310.9h4M54 310.9h5M60 310.9h3M64 310.9h5M78 310.9h2M46 312.9h2M49 312.9h4M54 312.9h6M61 312.9h3M65 312.9h5M78 312.9h2M46 314.9h2M49 314.9h4M54 314.9h7M62 314.9h3M66 314.9h11M78 314.9h3M82 314.9h5M46 316.9h2M49 316.9h4M54 316.9h7M62 316.9h7M78 316.9h2M46 318.9h2M49 318.9h4M54 318.9h7M78 318.9h2M46 320.9h2M49 320.9h4M78 320.9h2M46 322.9h2M49 322.9h4M78 322.9h2M46 324.9h2M49 324.9h4M78 324.9h2M46 326.9h2M49 326.9h4M78 326.9h2M46 328.9h2M49 328.9h5M78 328.9h2M46 330.9h2M49 330.9h5M78 330.9h2M46 332.9h2M49 332.9h4M54 332.9h3M58 332.9h6M65 332.9h8M74 332.9h6M81 332.9h2M46 334.9h2M49 334.9h4M78 334.9h2M46 336.9h2M49 336.9h4M54 336.9h6M61 336.9h1M78 336.9h2M46 338.9h2M49 338.9h4M54 338.9h6M61 338.9h1M78 338.9h2M46 340.9h2M49 340.9h4M54 340.9h6M61 340.9h1M78 340.9h2M46 342.9h2M49 342.9h4M54 342.9h6M61 342.9h1M78 342.9h2M46 344.9h2M49 344.9h4M54 344.9h6M61 344.9h1M78 344.9h2M46 346.9h2M49 346.9h8M78 346.9h2M46 348.9h2M49 348.9h8M58 348.9h6M65 348.9h7M73 348.9h4M78 348.9h4M83 348.9h2M46 350.9h2M49 350.9h4M54 350.9h2M78 350.9h2M46 352.9h2M49 352.9h4M54 352.9h3M78 352.9h2M46 354.9h2M49 354.9h4M54 354.9h3M78 354.9h2M46 356.9h2M49 356.9h4M54 356.9h3M78 356.9h2M46 358.9h2M49 358.9h3M53 358.9h3M57 358.9h2M78 358.9h2M46 360.9h2M49 360.9h4M54 360.9h6M61 360.9h1M78 360.9h2M46 362.9h2M49 362.9h4M54 362.9h6M61 362.9h1M78 362.9h2M46 364.9h2M49 364.9h4M54 364.9h6M61 364.9h1M78 364.9h2M46 366.9h2M49 366.9h6M78 366.9h2M46 368.9h2M49 368.9h4M54 368.9h5M78 368.9h2M46 370.9h2M49 370.9h4M54 370.9h5M78 370.9h2M46 372.9h2M49 372.9h3M53 372.9h3M57 372.9h2M60 372.9h3M64 372.9h5M70 372.9h1M72 372.9h3M78 372.9h2M46 374.9h2M49 374.9h3M53 374.9h3M57 374.9h2M60 374.9h3M64 374.9h5M70 374.9h1M72 374.9h2M78 374.9h2M46 376.9h2M49 376.9h3M53 376.9h3M57 376.9h2M60 376.9h6M67 376.9h7M75 376.9h4M80 376.9h2M46 378.9h2M49 378.9h3M53 378.9h3M57 378.9h2M78 378.9h2M46 380.9h2M49 380.9h4M78 380.9h2M46 382.9h2M49 382.9h4M54 382.9h6M78 382.9h2M46 384.9h2M49 384.9h4M54 384.9h3M58 384.9h3M78 384.9h2M46 386.9h2M49 386.9h3M78 386.9h2M0 398.9h80M0 400.9h1M0 402.9h1M2 402.9h7M10 402.9h4M15 402.9h7M23 402.9h3M27 402.9h4M32 402.9h9M42 402.9h7M50 402.9h2M53 402.9h3M57 402.9h16M0 404.9h1M2 404.9h2M5 404.9h4M10 404.9h3M14 404.9h4M19 404.9h8M28 404.9h3M32 404.9h8M41 404.9h4M46 404.9h3M50 404.9h4M55 404.9h4M60 404.9h4M65 404.9h8M0 406.9h1M2 406.9h4M7 406.9h11M0 408.9h1M0 410.9h80" stroke="#008000" stroke-opacity="0.60" stroke-width="1.15" fill="none"/>
<path d="M2 14.9h7M2 16.9h4M2 18.9h4M2 20.9h6M0 24.9h7M0 26.9h7M0 34.9h5M0 38.9h5M0 42.9h5M0 46.9h5M0 50.9h5M4 74.9h8M14 74.9h5M2 76.9h5M2 78.9h5M2 82.9h3M2 88.9h2M2 100.9h3M2 102.9h3M2 104.9h4M2 106.9h1M2 112.9h3M2 114.9h4M2 120.9h3M2 122.9h3M4 128.9h2M2 132.9h2M2 134.9h2M0 136.9h5M4 154.9h8M14 154.9h5M2 160.9h1M2 162.9h5M3 178.9h8M13 178.9h11M2 180.9h5M2 182.9h5M2 188.9h5M2 190.9h5M2 192.9h5M2 194.9h5M2 196.9h5M2 198.9h5M2 200.9h5M2 202.9h5M2 204.9h5M2 206.9h5M2 208.9h5M2 210.9h5M2 212.9h5M2 214.9h5M2 216.9h5M2 218.9h5M2 224.9h5M2 226.9h5M2 228.9h5M2 230.9h5M2 232.9h5M2 234.9h5M2 236.9h5M2 238.9h5M2 240.9h5M2 242.9h5M2 244.9h5M2 246.9h5M2 248.9h5M2 250.9h5M2 252.9h5M2 254.9h5M2 256.9h5M2 258.9h5M2 260.9h5M2 262.9h5M2 264.9h5M2 266.9h5M2 268.9h5M2 270.9h5M2 272.9h5M2 274.9h5M2 276.9h5M2 278.9h5M2 280.9h5M2 282.9h5M2 284.9h5M2 286.9h5M2 288.9h5M2 290.9h5M2 292.9h5M2 294.9h5M2 296.9h5M2 298.9h5M2 300.9h5M2 302.9h5M2 304.9h5M2 306.9h5M2 308.9h5M2 310.9h5M2 312.9h5M2 314.9h5M2 316.9h5M2 318.9h5M2 320.9h5M2 322.9h5M2 324.9h5M2 326.9h5M2 328.9h5M2 330.9h5M2 332.9h5M2 334.9h5M2 336.9h5M2 338.9h5M2 340.9h5M2 342.9h5M2 344.9h5M2 346.9h5M2 348.9h5M2 350.9h5M2 352.9h5M2 354.9h5M2 356.9h5M2 358.9h5M2 360.9h5M2 362.9h5M2 364.9h5M2 366.9h5M2 368.9h5M2 370.9h5M2 372.9h5M2 374.9h5M2 376.9h5M2 378.9h5M2 380.9h5M2 382.9h5M2 384.9h5M2 386.9h5M2 394.9h5M3 412.9h5M3 414.9h10M3 418.9h5M3 420.9h10M3 424.9h5M3 426.9h10M3 430.9h5M3 432.9h10M3 436.9h5M3 438.9h10M3 442.9h5M3 444.9h10M3 448.9h5M3 450.9h10M3 454.9h5M3 456.9h10M3 460.9h5M3 462.9h10M3 466.9h5M3 468.9h10M3 472.9h5M3 474.9h10M3 478.9h5M3 480.9h10M3 484.9h5M3 486.9h10M3 490.9h5M3 492.9h10M3 496.9h5M3 498.9h10M3 502.9h5M3 504.9h10M3 508.9h5M3 510.9h10M3 514.9h5M3 516.9h10M3 520.9h5M3 522.9h10M3 526.9h5M3 528.9h10M3 532.9h5M3 534.9h10M3 538.9h5M3 540.9h10M3 544.9h5M3 546.9h10M3 550.9h5M3 552.9h10M3 556.9h5M3 558.9h10M3 562.9h5M3 564.9h10M3 568.9h5M3 570.9h10M3 574.9h5M3 576.9h10M3 580.9h5M3 582.9h10M3 586.9h5M3 588.9h10M3 592.9h5M3 594.9h10M3 598.9h5M3 600.9h10M3 604.9h5M3 606.9h10M3 610.9h5M3 612.9h10M3 616.9h5M3 618.9h10M3 622.9h5M3 624.9h10M3 628.9h5M3 630.9h10M3 634.9h5M3 636.9h10M3 640.9h5M3 642.9h10M3 646.9h5M3 648.9h10M3 652.9h5M3 654.9h10M3 658.9h5M3 660.9h10M3 664.9h5M3 666.9h10M3 670.9h5M3 672.9h10M3 676.9h5M3 678.9h10M3 682.9h5M3 684.9h10" stroke="#3b3b3b" stroke-opacity="0.40" stroke-width="1.15" fill="none"/>
<path d="M10 14.9h7M7 16.9h6M14 16.9h2M7 18.9h7M9 24.9h12M9 26.9h15M7 34.9h7M7 38.9h6M7 42.9h6M7 46.9h5M7 50.9h5M19 74.9h14M9 76.9h13M9 78.9h13M25 78.9h8M13 82.9h7M6 88.9h10M11 100.9h5M11 102.9h5M4 106.9h15M6 122.9h11M7 128.9h17M6 132.9h4M7 136.9h13M22 136.9h1M24 136.9h13M19 154.9h16M37 154.9h2M42 154.9h8M5 160.9h13M9 162.9h15M26 162.9h1M28 162.9h15M26 178.9h1M30 178.9h8M9 180.9h12M24 180.9h6M9 182.9h12M23 182.9h1M25 182.9h12M9 188.9h7M9 190.9h13M9 192.9h11M9 194.9h17M9 196.9h17M9 198.9h16M9 200.9h18M9 210.9h11M9 212.9h16M9 216.9h14M9 218.9h15M12 224.9h15M12 226.9h14M12 228.9h21M12 230.9h19M12 232.9h16M12 234.9h14M12 236.9h16M12 238.9h16M12 240.9h16M12 242.9h16M12 244.9h16M12 246.9h23M12 248.9h23M12 250.9h23M12 252.9h23M12 254.9h23M12 256.9h23M12 258.9h23M12 260.9h14M12 262.9h18M12 264.9h19M12 266.9h19M12 268.9h19M12 270.9h18M12 272.9h24M12 274.9h24M12 276.9h29M12 278.9h18M12 280.9h15M12 282.9h15M12 284.9h15M12 286.9h18M12 288.9h18M12 290.9h18M12 292.9h18M12 294.9h15M12 296.9h15M12 298.9h17M12 300.9h17M12 302.9h17M12 304.9h20M12 306.9h20M12 308.9h22M12 310.9h25M12 312.9h24M12 314.9h29M12 316.9h18M12 318.9h23M12 320.9h15M12 322.9h15M12 324.9h15M12 326.9h15M12 328.9h16M12 330.9h16M12 332.9h19M12 334.9h15M12 336.9h23M12 338.9h23M12 340.9h23M12 342.9h23M12 344.9h23M12 346.9h14M12 348.9h19M12 350.9h18M12 352.9h19M12 354.9h19M12 356.9h19M12 358.9h17M12 360.9h23M12 362.9h23M12 364.9h23M12 366.9h17M12 368.9h18M12 370.9h18M12 372.9h25M12 374.9h24M12 376.9h22M12 378.9h17M12 380.9h15M12 384.9h19M12 386.9h14M9 394.9h12M23 394.9h1M25 394.9h12M14 412.9h11M14 414.9h11M26 414.9h15M14 418.9h17M14 420.9h17M32 420.9h15M14 424.9h17M14 426.9h17M32 426.9h15M14 430.9h16M14 432.9h16M31 432.9h15M14 436.9h18M14 438.9h18M33 438.9h15M14 442.9h11M14 444.9h11M26 444.9h15M14 448.9h16M14 450.9h16M31 450.9h15M14 454.9h14M14 456.9h14M29 456.9h15M14 460.9h15M14 462.9h15M30 462.9h15M14 466.9h15M14 468.9h15M30 468.9h15M14 472.9h14M14 474.9h14M29 474.9h15M14 478.9h21M14 480.9h21M36 480.9h15M14 484.9h19M14 486.9h19M34 486.9h15M14 490.9h16M14 492.9h16M31 492.9h15M14 496.9h14M14 498.9h14M29 498.9h15M14 502.9h16M14 504.9h16M31 504.9h15M14 508.9h16M14 510.9h16M31 510.9h15M14 514.9h16M14 516.9h16M31 516.9h15M14 520.9h16M14 522.9h16M31 522.9h15M14 526.9h16M14 528.9h16M31 528.9h15M14 532.9h23M14 534.9h23M38 534.9h15M14 538.9h23M14 540.9h23M38 540.9h15M14 544.9h23M14 546.9h23M38 546.9h15M14 550.9h23M14 552.9h23M38 552.9h15M14 556.9h23M14 558.9h23M38 558.9h15M14 562.9h23M14 564.9h23M38 564.9h15M14 568.9h23M14 570.9h23M38 570.9h15M14 574.9h14M14 576.9h14M29 576.9h15M14 580.9h18M14 582.9h18M33 582.9h15M14 586.9h19M14 588.9h19M34 588.9h15M14 592.9h19M14 594.9h19M34 594.9h15M14 598.9h19M14 600.9h19M34 600.9h15M14 604.9h18M14 606.9h18M33 606.9h15M14 610.9h24M14 612.9h24M39 612.9h15M14 616.9h24M14 618.9h24M39 618.9h15M14 622.9h29M14 624.9h29M44 624.9h15M14 628.9h18M14 630.9h18M33 630.9h15M14 634.9h15M14 636.9h15M30 636.9h15M14 640.9h15M14 642.9h15M30 642.9h15M14 646.9h15M14 648.9h15M30 648.9h15M14 652.9h18M14 654.9h18M33 654.9h15M14 658.9h18M14 660.9h18M33 660.9h15M14 664.9h18M14 666.9h18M33 666.9h15M14 670.9h18M14 672.9h18M33 672.9h15M14 676.9h15M14 678.9h15M30 678.9h15M14 682.9h15M14 684.9h15M30 684.9h15" stroke="#001080" stroke-opacity="0.62" stroke-width="1.15" fill="none"/>
<path d="M13 16.9h1M22 78.9h1M24 78.9h1M0 80.9h14M10 82.9h1M12 82.9h1M0 94.9h13M0 96.9h17M8 100.9h1M10 100.9h1M8 102.9h1M10 102.9h1M9 104.9h1M0 110.9h12M9 112.9h1M11 112.9h1M14 112.9h1M9 114.9h1M13 114.9h1M0 118.9h16M8 120.9h1M20 136.9h1M23 136.9h1M35 154.9h1M36 154.9h1M39 154.9h1M40 154.9h1M41 154.9h1M0 156.9h16M0 158.9h14M24 162.9h1M27 162.9h1M24 178.9h1M25 178.9h1M27 178.9h1M28 178.9h1M29 178.9h1M21 180.9h1M23 180.9h1M21 182.9h1M24 182.9h1M0 186.9h13M21 394.9h1M24 394.9h1M25 414.9h1M31 420.9h1M31 426.9h1M30 432.9h1M32 438.9h1M25 444.9h1M30 450.9h1M28 456.9h1M29 462.9h1M29 468.9h1M28 474.9h1M35 480.9h1M33 486.9h1M30 492.9h1M28 498.9h1M30 504.9h1M30 510.9h1M30 516.9h1M30 522.9h1M30 528.9h1M37 534.9h1M37 540.9h1M37 546.9h1M37 552.9h1M37 558.9h1M37 564.9h1M37 570.9h1M28 576.9h1M32 582.9h1M33 588.9h1M33 594.9h1M33 600.9h1M32 606.9h1M38 612.9h1M38 618.9h1M43 624.9h1M32 630.9h1M29 636.9h1M29 642.9h1M29 648.9h1M32 654.9h1M32 660.9h1M32 666.9h1M32 672.9h1M29 678.9h1M29 684.9h1" stroke="#000000" stroke-opacity="0.60" stroke-width="1.15" fill="none"/>
<path d="M8 82.9h2M6 100.9h2M6 102.9h2M7 104.9h2M7 112.9h2M12 112.9h2M7 114.9h2M11 114.9h2M6 120.9h2M10 120.9h2M6 134.9h2" stroke="#0000ff" stroke-opacity="0.60" stroke-width="1.15" fill="none"/>
<path d="M11 104.9h2M15 114.9h2M9 202.9h1M9 204.9h1M9 206.9h1M9 208.9h1M9 214.9h1M12 382.9h1" stroke="#098658" stroke-opacity="0.55" stroke-width="1.15" fill="none"/>
</svg>
<div class="abs" style="left:838px;top:0;width:1px;height:686px;background:#e4e4e4"></div>
<svg width="14" height="686" viewBox="0 0 14 686" style="left:838px;top:0">
<rect x="5" y="54" width="5" height="6" fill="#a9a9a9"/><rect x="5" y="87" width="5" height="6" fill="#a9a9a9"/>
<rect x="10" y="32.6" width="3.2" height="6.4" fill="#1a7df3"/>
<rect x="10" y="43.0" width="3.2" height="17.0" fill="#1a7df3"/>
<rect x="10" y="65.0" width="3.2" height="6.0" fill="#1a7df3"/>
<rect x="10" y="74.4" width="3.2" height="35.2" fill="#1a7df3"/>
<rect x="10" y="118.0" width="3.2" height="9.0" fill="#1a7df3"/>
<rect x="10" y="137.0" width="3.2" height="12.0" fill="#1a7df3"/>
<rect x="10" y="157.8" width="3.2" height="6.0" fill="#1a7df3"/>
<rect x="10" y="167.0" width="3.2" height="6.0" fill="#1a7df3"/>
<rect x="10" y="186.5" width="3.2" height="6.0" fill="#1a7df3"/>
<rect x="10" y="207.5" width="3.2" height="7.0" fill="#1a7df3"/>
<rect x="10" y="218.0" width="3.2" height="21.7" fill="#1a7df3"/>
<rect x="10" y="246.7" width="3.2" height="5.6" fill="#1a7df3"/>
<rect x="10" y="257.0" width="3.2" height="25.8" fill="#1a7df3"/>
<rect x="10" y="314.0" width="3.2" height="5.5" fill="#1a7df3"/>
<rect x="10" y="324.8" width="3.2" height="5.9" fill="#1a7df3"/>
<rect x="10" y="336.0" width="3.2" height="6.0" fill="#1a7df3"/>
<rect x="10" y="467.5" width="3.2" height="12.3" fill="#1a7df3"/>
<rect x="10" y="486.8" width="3.2" height="5.9" fill="#1a7df3"/>
<rect x="10" y="509.5" width="3.2" height="9.8" fill="#1a7df3"/>
<rect x="10" y="525.0" width="3.2" height="9.7" fill="#1a7df3"/>
<rect x="10" y="563.8" width="3.2" height="5.9" fill="#1a7df3"/>
<rect x="10" y="598.8" width="3.2" height="5.2" fill="#1a7df3"/>
<rect x="10" y="618.0" width="3.2" height="14.0" fill="#1a7df3"/>
<rect x="1" y="88.4" width="12.500" height="2" fill="#1e1e1e"/>
</svg>

</div>
<div id="status" class="abs">
  <div id="remote" class="abs"></div>
  <svg width="12" height="14" viewBox="0 0 12 14" style="left:11px;top:4px" fill="none" stroke="#fff" stroke-width="1.200"><path d="M1.600 4L6 8.400L1.600 12.800M10.600 1L6.700 5L10.600 9"/></svg>
  <svg width="12" height="16" viewBox="0 0 12 16" style="left:43px;top:3px" fill="none" stroke="#fff" stroke-width="1.100"><circle cx="3" cy="3" r="1.800"/><circle cx="3" cy="13" r="1.800"/><circle cx="9.500" cy="4.500" r="1.800"/><path d="M3 4.800V11.200M9.500 6.300C9.500 9 3 8 3 11"/></svg>
  <span class="st" id="s_main" style="left:60px">main*+</span>
  <svg width="16" height="16" viewBox="0 0 16 16" style="left:104px;top:3px" fill="none" stroke="#fff" stroke-width="1.200"><path d="M2.500 7A5.500 5.500 0 0 1 12.500 4.500M13.500 9A5.500 5.500 0 0 1 3.500 11.500"/><path d="M13 1.500V5H9.500M3 14.500V11H6.500"/></svg>
  <svg width="13" height="13" viewBox="0 0 13 13" style="left:135px;top:5px" fill="none" stroke="#fff" stroke-width="1.100"><circle cx="6.500" cy="6.500" r="5.700"/><path d="M4.200 4.200L8.800 8.800M8.800 4.200L4.200 8.800"/></svg>
  <span class="st" style="left:152px">0</span>
  <svg width="14" height="13" viewBox="0 0 14 13" style="left:162px;top:5px" fill="none" stroke="#fff" stroke-width="1.100" stroke-linejoin="round"><path d="M7 1L13 12H1Z"/><path d="M7 5V8.500M7 9.600V10.800"/></svg>
  <span class="st" style="left:179px">0</span>
  <svg width="13" height="13" viewBox="0 0 13 13" style="left:189px;top:5px" fill="none" stroke="#fff" stroke-width="1.100"><circle cx="6.500" cy="6.500" r="5.700"/><path d="M6.500 5.800V9.500M6.500 3.500V4.700"/></svg>
  <span class="st" style="left:207px">100</span>
  <span class="st" id="s_gg" style="left:242px;letter-spacing:-0.22px">Git Graph</span>
  <span class="st" id="s_ep" style="left:308px;letter-spacing:-0.33px">EIDE Project: Debug</span>
  <svg width="14" height="14" viewBox="0 0 14 14" style="left:430px;top:4px" fill="none" stroke="#fff" stroke-width="1.400"><path d="M2 12L8 6M11.500 1.500A3 3 0 0 0 8 6M12.500 2.500A3 3 0 0 1 8 6"/><path d="M12 12L5.500 5.500M2.500 1.500L5.500 2.500L5.500 5.500L2.500 4.500Z"/></svg>
  <span class="st" id="s_b" style="left:447px;letter-spacing:-0.24px">Build</span>
  <svg width="10" height="12" viewBox="0 0 10 12" style="left:491.500px;top:5px" fill="none" stroke="#fff" stroke-width="1.200"><path d="M5 0.500V10.500M1 6.500L5 10.500L9 6.500"/></svg>
  <span class="st" id="s_f" style="left:508px;letter-spacing:-0.8px">Flash</span>
  <span class="st" id="s_ln" style="left:781px;letter-spacing:-0.15px">行 85，列 17</span>
  <span class="st" id="s_sp" style="left:865px;letter-spacing:-0.35px">空格: 2</span>
  <span class="st" id="s_u" style="left:918px;letter-spacing:-0.6px">UTF-8</span>
  <span class="st" id="s_c" style="left:965px;transform-origin:0 50%;transform:scaleX(.83);letter-spacing:-0.1px">CRLF</span>
  <span class="st" style="left:1008.500px;letter-spacing:2.500px;font-size:12.500px;line-height:21px">{}</span>
  <span class="st" id="s_a" style="left:1027px;letter-spacing:-0.55px">ARM</span>
  <svg width="14" height="12" viewBox="0 0 14 12" style="left:1069.500px;top:5px"><path d="M3 0.500H11C12.500 0.500 13 1.500 13 3V5.500L13.800 6.500V8.500C12.500 10.500 9.500 11.500 7 11.500S1.500 10.500 0.200 8.500V6.500L1 5.500V3C1 1.500 1.500 0.500 3 0.500Z" fill="#fff"/><rect x="2.200" y="1.800" width="3.800" height="3.400" rx="1" fill="#007acc"/><rect x="8" y="1.800" width="3.800" height="3.400" rx="1" fill="#007acc"/><rect x="4.500" y="7" width="1.300" height="2.200" fill="#007acc"/><rect x="8.200" y="7" width="1.300" height="2.200" fill="#007acc"/></svg>
  <svg width="13" height="13" viewBox="0 0 13 13" style="left:1099.500px;top:5px" fill="none" stroke="#fff" stroke-width="1.200"><circle cx="6.500" cy="6.500" r="5.700"/><path d="M10.500 2.500L2.500 10.500"/></svg>
  <span class="st" id="s_p" style="left:1117px;letter-spacing:-0.1px">Prettier</span>
  <svg width="13" height="14" viewBox="0 0 13 14" style="left:1172px;top:4px" fill="none" stroke="#fff" stroke-width="1.200" stroke-linejoin="round"><path d="M6.500 1C3.800 1 2.500 3 2.500 5.500V8.500L1 10.500H12L10.500 8.500V5.500C10.500 3 9.200 1 6.500 1Z"/><path d="M5 11.500A1.500 1.500 0 0 0 8 11.500"/></svg>
</div>
<div id="menu" class="abs">
<div class="it" style="top:3.5px"><span class="t">新建文本文件</span><span class="k">Ctrl+N</span></div>
<div class="it sel" style="top:29.5px"><span class="t">新建文件...</span><span class="k">Ctrl+Alt+Windows+N</span></div>
<div class="it" style="top:55.5px"><span class="t">新建窗口</span><span class="k">Ctrl+Shift+N</span></div>
<div class="it" style="top:81.5px"><span class="t">使用配置文件新建窗口</span><svg width="7" height="12" viewBox="0 0 7 12" style="right:13px;top:7px"><path d="M1 1L6 6L1 11" fill="none" stroke="#424242" stroke-width="1.100"/></svg></div>
<div class="sep" style="top:112.5px"></div>
<div class="it" style="top:118.5px"><span class="t">打开文件...</span><span class="k">Ctrl+O</span></div>
<div class="it" style="top:144.5px"><span class="t">打开文件夹...</span><span class="k">Ctrl+K Ctrl+O</span></div>
<div class="it" style="top:170.5px"><span class="t">从文件打开工作区...</span></div>
<div class="it" style="top:196.5px"><span class="t">打开最近的文件</span><svg width="7" height="12" viewBox="0 0 7 12" style="right:13px;top:7px"><path d="M1 1L6 6L1 11" fill="none" stroke="#424242" stroke-width="1.100"/></svg></div>
<div class="sep" style="top:227.5px"></div>
<div class="it" style="top:233.5px"><span class="t">将文件夹添加到工作区...</span></div>
<div class="it" style="top:259.5px"><span class="t">将工作区另存为...</span></div>
<div class="it" style="top:285.5px"><span class="t">复制工作区</span></div>
<div class="sep" style="top:316.5px"></div>
<div class="it" style="top:322.5px"><span class="t">保存</span><span class="k">Ctrl+S</span></div>
<div class="it" style="top:348.5px"><span class="t">另存为...</span><span class="k">Ctrl+Shift+S</span></div>
<div class="it dis" style="top:374.5px"><span class="t">全部保存</span><span class="k">Ctrl+K S</span></div>
<div class="sep" style="top:405.5px"></div>
<div class="it" style="top:411.5px"><span class="t">共享</span><svg width="7" height="12" viewBox="0 0 7 12" style="right:13px;top:7px"><path d="M1 1L6 6L1 11" fill="none" stroke="#424242" stroke-width="1.100"/></svg></div>
<div class="sep" style="top:442.5px"></div>
<div class="it" style="top:448.5px"><svg width="12" height="10" viewBox="0 0 12 10" style="left:9px;top:8px"><path d="M1 5.500L4.200 8.700L11 1" fill="none" stroke="#424242" stroke-width="1.100"/></svg><span class="t">自动保存</span></div>
<div class="it" style="top:474.5px"><span class="t">首选项</span><svg width="7" height="12" viewBox="0 0 7 12" style="right:13px;top:7px"><path d="M1 1L6 6L1 11" fill="none" stroke="#424242" stroke-width="1.100"/></svg></div>
<div class="sep" style="top:505.5px"></div>
<div class="it" style="top:511.5px"><span class="t">还原文件</span></div>
<div class="it" style="top:537.5px"><span class="t">关闭编辑器</span><span class="k">Ctrl+F4</span></div>
<div class="it" style="top:563.5px"><span class="t">关闭工作区</span><span class="k">Ctrl+K F</span></div>
<div class="it" style="top:589.5px"><span class="t">关闭窗口</span><span class="k">Alt+F4</span></div>
<div class="sep" style="top:620.5px"></div>
<div class="it" style="top:626.5px"><span class="t">退出</span></div>
</div>
</div></div>
<!-- watermark -->
<div class="wm" style="left:345px;top:72px">YuanZiHao<br>2025-10-31 11:18:54</div><div class="wm" style="left:855px;top:62px">YuanZiHao<br>2025-10-31 11:18:54</div><div class="wm" style="left:85px;top:336px">YuanZiHao<br>2025-10-31 11:18:54</div><div class="wm" style="left:405px;top:336px">YuanZiHao<br>2025-10-31 11:18:54</div><div class="wm" style="left:717px;top:336px">YuanZiHao<br>2025-10-31 11:18:54</div><div class="wm" style="left:1037px;top:336px">YuanZiHao<br>2025-10-31 11:18:54</div><div class="wm" style="left:85px;top:612px">YuanZiHao<br>2025-10-31 11:18:54</div><div class="wm" style="left:405px;top:612px">YuanZiHao<br>2025-10-31 11:18:54</div><div class="wm" style="left:725px;top:610px">YuanZiHao<br>2025-10-31 11:18:54</div><div class="wm" style="left:1045px;top:610px">YuanZiHao<br>2025-10-31 11:18:54</div>
<!-- surrounding desktop slivers -->
<div class="abs" style="left:0;top:0;width:1200px;height:1px;background:#f1f1f1;z-index:0"></div><i class="abs" style="left:23px;top:0;width:2px;height:1px;background:#555"></i><i class="abs" style="left:74px;top:0;width:2px;height:1px;background:#555"></i><i class="abs" style="left:110px;top:0;width:1px;height:1px;background:#555"></i><i class="abs" style="left:131px;top:0;width:3px;height:1px;background:#555"></i><i class="abs" style="left:185px;top:0;width:3px;height:1px;background:#555"></i><i class="abs" style="left:215px;top:0;width:2px;height:1px;background:#555"></i><i class="abs" style="left:243px;top:0;width:1px;height:1px;background:#555"></i><i class="abs" style="left:258px;top:0;width:1px;height:1px;background:#555"></i><i class="abs" style="left:270px;top:0;width:1px;height:1px;background:#555"></i><i class="abs" style="left:300px;top:0;width:3px;height:1px;background:#555"></i><i class="abs" style="left:345px;top:0;width:2px;height:1px;background:#555"></i><i class="abs" style="left:378px;top:0;width:1px;height:1px;background:#555"></i><i class="abs" style="left:395px;top:0;width:2px;height:1px;background:#555"></i><i class="abs" style="left:420px;top:0;width:2px;height:1px;background:#555"></i><i class="abs" style="left:431px;top:0;width:2px;height:1px;background:#555"></i><i class="abs" style="left:490px;top:0;width:2px;height:1px;background:#555"></i><i class="abs" style="left:510px;top:0;width:1px;height:1px;background:#555"></i><i class="abs" style="left:540px;top:0;width:2px;height:1px;background:#555"></i><i class="abs" style="left:583px;top:0;width:2px;height:1px;background:#555"></i><i class="abs" style="left:640px;top:0;width:1px;height:1px;background:#555"></i><i class="abs" style="left:668px;top:0;width:2px;height:1px;background:#555"></i><i class="abs" style="left:702px;top:0;width:2px;height:1px;background:#555"></i><i class="abs" style="left:745px;top:0;width:2px;height:1px;background:#555"></i><i class="abs" style="left:790px;top:0;width:2px;height:1px;background:#555"></i><i class="abs" style="left:812px;top:0;width:2px;height:1px;background:#555"></i><i class="abs" style="left:860px;top:0;width:2px;height:1px;background:#555"></i><i class="abs" style="left:991px;top:0;width:2px;height:1px;background:#555"></i><i class="abs" style="left:1040px;top:0;width:1px;height:1px;background:#555"></i><i class="abs" style="left:1100px;top:0;width:2px;height:1px;background:#555"></i><i class="abs" style="left:921px;top:0;width:16px;height:1px;background:#2b6fd0"></i><i class="abs" style="left:1170px;top:0;width:12px;height:1px;background:#2b6fd0"></i>
<div class="abs" style="left:0;top:799px;width:1200px;height:1px;background:#fbfbfb"></div><i class="abs" style="left:836px;top:799px;width:8px;height:1px;background:#333"></i><i class="abs" style="left:850px;top:799px;width:6px;height:1px;background:#333"></i><i class="abs" style="left:859px;top:799px;width:3px;height:1px;background:#333"></i><i class="abs" style="left:865px;top:799px;width:5px;height:1px;background:#333"></i><i class="abs" style="left:874px;top:799px;width:2px;height:1px;background:#333"></i><i class="abs" style="left:880px;top:799px;width:2px;height:1px;background:#333"></i><i class="abs" style="left:886px;top:799px;width:6px;height:1px;background:#333"></i><i class="abs" style="left:896px;top:799px;width:6px;height:1px;background:#333"></i><i class="abs" style="left:905px;top:799px;width:5px;height:1px;background:#333"></i><i class="abs" style="left:916px;top:799px;width:6px;height:1px;background:#333"></i><i class="abs" style="left:926px;top:799px;width:5px;height:1px;background:#333"></i><i class="abs" style="left:937px;top:799px;width:3px;height:1px;background:#333"></i><i class="abs" style="left:943px;top:799px;width:4px;height:1px;background:#333"></i><i class="abs" style="left:951px;top:799px;width:2px;height:1px;background:#333"></i><i class="abs" style="left:955px;top:799px;width:2px;height:1px;background:#333"></i><i class="abs" style="left:963px;top:799px;width:8px;height:1px;background:#333"></i><i class="abs" style="left:975px;top:799px;width:6px;height:1px;background:#333"></i><i class="abs" style="left:987px;top:799px;width:8px;height:1px;background:#333"></i><i class="abs" style="left:999px;top:799px;width:3px;height:1px;background:#333"></i><i class="abs" style="left:1005px;top:799px;width:2px;height:1px;background:#333"></i><i class="abs" style="left:1013px;top:799px;width:3px;height:1px;background:#333"></i><i class="abs" style="left:1022px;top:799px;width:4px;height:1px;background:#333"></i><i class="abs" style="left:1029px;top:799px;width:4px;height:1px;background:#333"></i><i class="abs" style="left:1039px;top:799px;width:8px;height:1px;background:#333"></i>
<div class="abs" style="left:0;top:8px;width:1px;height:784px;background:#b4b4b4"></div><div class="abs" style="left:1199px;top:8px;width:1px;height:784px;background:#8c8c8c"></div>
<!-- annotations -->
<div class="box" style="left:26.500px;top:3.200px;width:64.500px;height:28.300px;border-radius:3.500px"></div>
<div class="dot" style="left:85.800px;top:1.600px;width:30.400px;height:30.400px;line-height:30px;font-size:21px">1</div>
<div class="box" style="left:31px;top:56px;width:312px;height:35px"></div>
<div class="dot" style="left:333px;top:52px">2</div>
</body>
</html>
